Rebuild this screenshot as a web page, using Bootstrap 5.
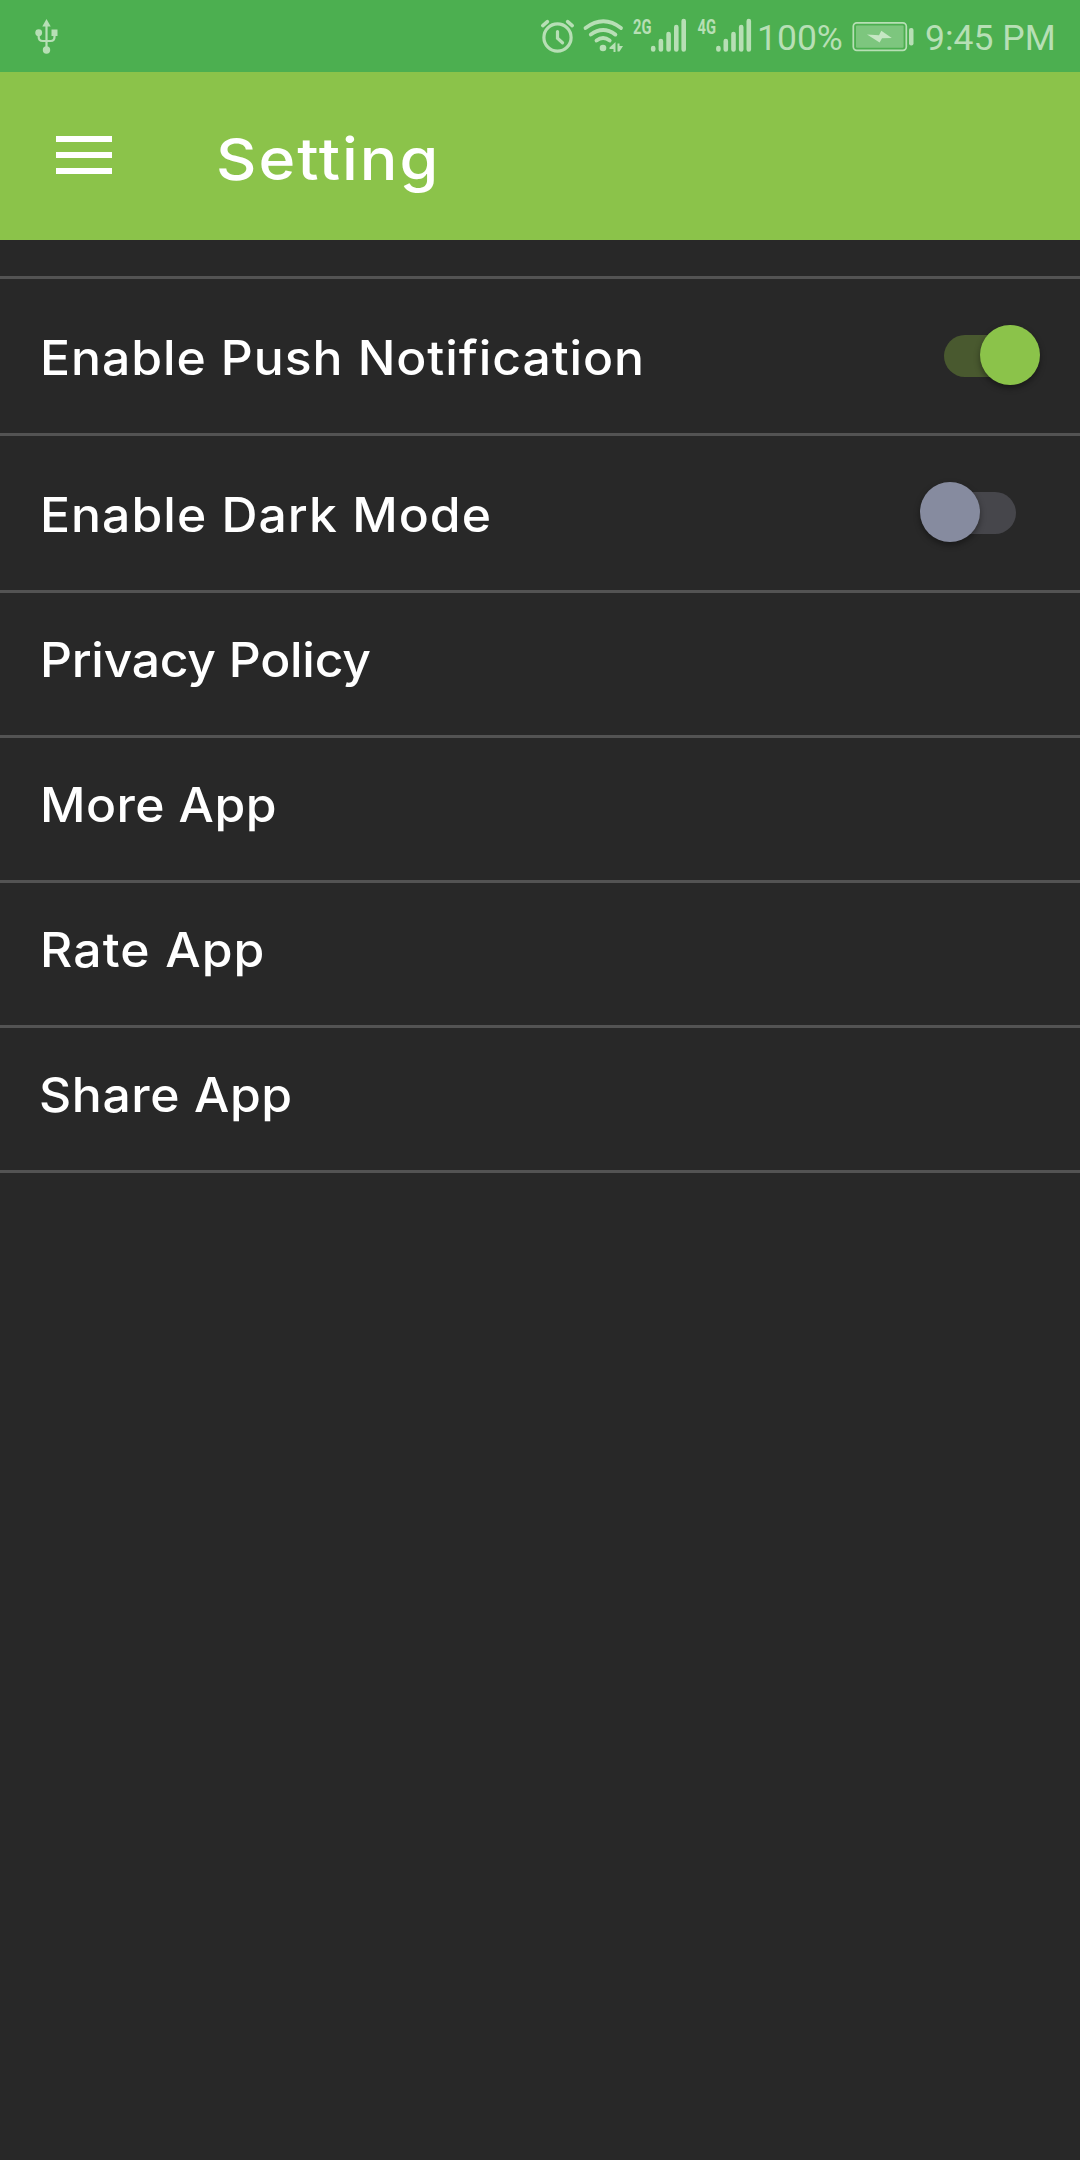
<!DOCTYPE html>
<html lang="en" data-bs-theme="dark">
<head>
<meta charset="utf-8">
<meta name="viewport" content="width=device-width, initial-scale=1">
<title>Setting</title>
<link href="https://cdn.jsdelivr.net/npm/bootstrap@5.3.0/dist/css/bootstrap.min.css" rel="stylesheet">
<style>
body{background:#282828;color:#fff;font-family:Inter,"Open Sans",sans-serif;font-weight:500;min-height:2160px}
.statusbar{height:72px;background:#4caf50;color:#b7dfb5;font-family:Roboto,sans-serif;font-weight:400}
.statusbar svg{display:block;flex:none;height:72px}
.status-text{font-size:35.5px;line-height:72px;white-space:nowrap;padding-top:2px}
.pct{width:94px;padding-left:1px}
.clock{width:162px;padding-left:7px}
.appbar{height:168px;background:#8bc34a;padding:0 56px}
.menu-btn{width:56px;height:38px;margin-top:-2px}
.menu-btn span{height:6px;background:#fff}
.title{font-size:58px;line-height:1;margin-left:104px;margin-top:6px;letter-spacing:1.83px;transform:scaleX(1.08);transform-origin:left}
.settings{margin-top:36px;border-top:3px solid #535353;--bs-list-group-bg:transparent;--bs-list-group-color:#fff}
.settings .list-group-item,.settings .list-group-item:last-child{height:145px;padding:0 40px;border:0;border-bottom:3px solid #535353;font-size:47.5px;line-height:1}
.settings .list-group-item.switch-row{height:157px}
.item-label{display:block;white-space:nowrap;margin-bottom:8px;transform:scaleX(1.05);transform-origin:left}
.switch-row .item-label{margin:4px 0 0}
.ls-push{letter-spacing:.88px}
.ls-dark{letter-spacing:.97px}
.ls-privacy{letter-spacing:-.26px}
.ls-more{letter-spacing:.39px}
.ls-rate{letter-spacing:1.08px}
.ls-share{letter-spacing:.55px;margin-left:-1px}
.switch-row .form-check-input{width:72px;height:42px;margin:0 24px 0 0;border:0;border-radius:21px;background:#46464b;position:relative;box-shadow:none}
.switch-row .form-check-input::before{content:"";position:absolute;width:60px;height:60px;border-radius:50%;top:-10px;left:-24px;background:#868b9f;box-shadow:0 3px 6px rgba(0,0,0,.4)}
.switch-row .form-check-input:checked{background:#49592f}
.switch-row .form-check-input:checked::before{left:36px;background:#8bc34a}
</style>
</head>
<body>
<div class="statusbar d-flex">
  <svg width="540" viewBox="0 0 540 72" fill="#b7dfb5"><path d="M46.500 19l4.200 7.500h-8.400z"/><circle cx="46.500" cy="50" r="3.700"/><circle cx="38.700" cy="32.700" r="3.400"/><path d="M51.500 29.500h6v6.500h-6z"/><path d="M46.500 25v22M38.700 34v3q0 4 4 4h8q3.800 0 3.800-4v-3" fill="none" stroke="#b7dfb5" stroke-width="2.200"/></svg>
  <svg width="40" viewBox="540 0 40 72" fill="none" stroke="#b7dfb5" stroke-linecap="round"><circle cx="557.500" cy="37.500" r="13.600" stroke-width="3.200"/><path d="M557.500 31.500v6.700l5 4.600" stroke-width="3.200"/><path d="M542.800 25.600l4.600-4M572.200 25.600l-4.600-4" stroke-width="3.600"/></svg>
  <svg width="50" viewBox="580 0 50 72" fill="none" stroke="#b7dfb5" stroke-width="3.800" stroke-linecap="round"><path d="M585.500 28q18-13.500 35.500 0M590.800 34.600q12.200-9.200 24.600 0M596.500 40.500q6.600-5 13.200 0"/><circle cx="603" cy="48" r="3.300" fill="#b7dfb5" stroke="none"/><path d="M609.500 47.500l6-5.500v10h-2v-3h-4zM617.500 43.500h2v2.500h3.500l-3.500 5.500h-2z" fill="#b7dfb5" stroke="none"/></svg>
  <svg width="64" viewBox="630 0 64 72" fill="#b7dfb5"><text x="633" y="33.500" font-size="20" font-weight="700" textLength="18.500" lengthAdjust="spacingAndGlyphs">2G</text><path d="M653.200 48v1.500M660.900 41v8.500M668.600 34v15.500M676.300 27v22.500M683.700 21v28.500" stroke="#b7dfb5" stroke-width="4.600" stroke-linecap="round"/></svg>
  <svg width="62" viewBox="694 0 62 72" fill="#b7dfb5"><text x="697.500" y="33.500" font-size="20" font-weight="700" textLength="18.500" lengthAdjust="spacingAndGlyphs">4G</text><path d="M718.400 48v1.500M725.800 41v8.500M733.500 34v15.500M741.200 27v22.500M748.800 21v28.500" stroke="#b7dfb5" stroke-width="4.600" stroke-linecap="round"/></svg>
  <span class="status-text pct">100%</span>
  <svg width="68" viewBox="850 0 68 72"><rect x="853.300" y="22.800" width="53" height="27.500" rx="3.500" fill="none" stroke="#b7dfb5" stroke-width="1.700"/><rect x="856" y="25.500" width="47.600" height="22.200" rx="1" fill="#7dc67e"/><path d="M867 34.500l12 .8 2.300-4.500 10.500 7.200-9.800.2-2.400 4.300z" fill="#c6e7c4"/><rect x="909" y="28" width="4.500" height="17.500" rx="2" fill="#b7dfb5"/></svg>
  <span class="status-text clock">9:45 PM</span>
</div>
<header class="appbar d-flex align-items-center">
  <div class="menu-btn d-flex flex-column justify-content-between"><span></span><span></span><span></span></div>
  <h1 class="title fw-medium mb-0">Setting</h1>
</header>
<div class="settings list-group list-group-flush rounded-0">
  <div class="list-group-item switch-row d-flex align-items-center justify-content-between"><span class="item-label ls-push">Enable Push Notification</span><div class="form-switch p-0 d-flex"><input class="form-check-input" type="checkbox" role="switch" checked></div></div>
  <div class="list-group-item switch-row d-flex align-items-center justify-content-between"><span class="item-label ls-dark">Enable Dark Mode</span><div class="form-switch p-0 d-flex"><input class="form-check-input" type="checkbox" role="switch"></div></div>
  <div class="list-group-item d-flex align-items-center"><span class="item-label ls-privacy">Privacy Policy</span></div>
  <div class="list-group-item d-flex align-items-center"><span class="item-label ls-more">More App</span></div>
  <div class="list-group-item d-flex align-items-center"><span class="item-label ls-rate">Rate App</span></div>
  <div class="list-group-item d-flex align-items-center"><span class="item-label ls-share">Share App</span></div>
</div>
<script src="https://cdn.jsdelivr.net/npm/bootstrap@5.3.0/dist/js/bootstrap.bundle.min.js"></script>
</body>
</html>
